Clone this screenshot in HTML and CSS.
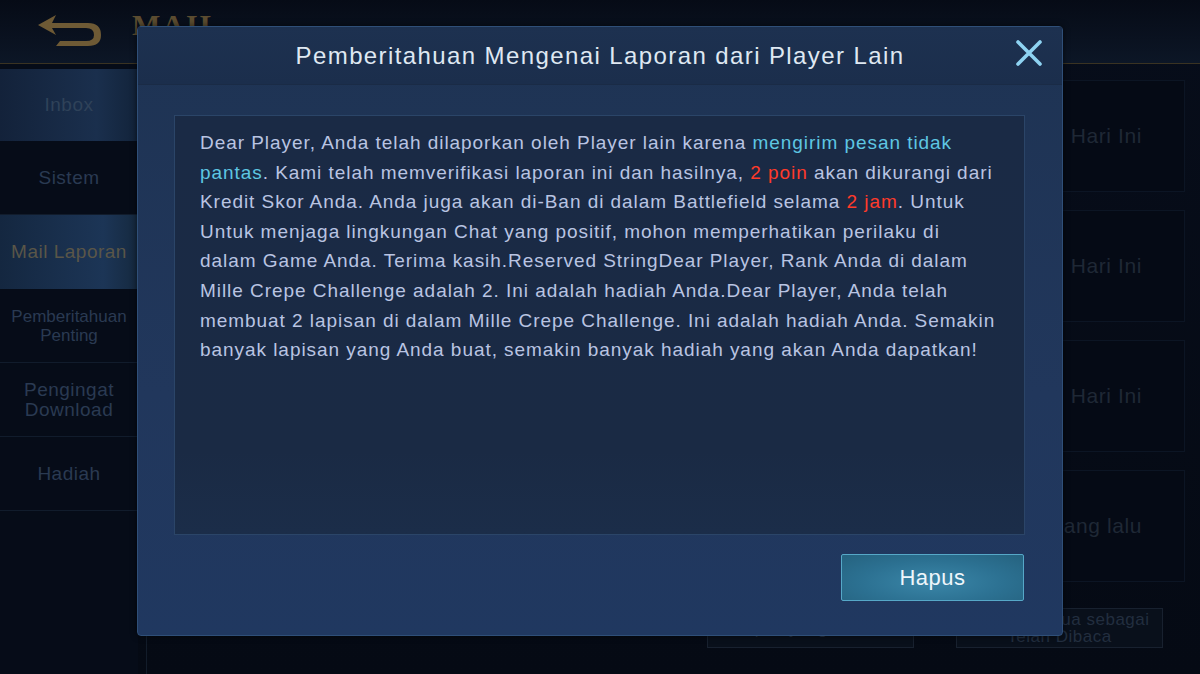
FILE: index.html
```html
<!DOCTYPE html>
<html lang="id">
<head>
    <meta charset="UTF-8">
    <meta name="viewport" content="width=device-width, initial-scale=1.0">
    <title>Mail</title>
    <link rel="stylesheet" href="styles.css">
</head>
<body>
    <div class="screen">
        <div class="topbar">
            <svg class="back" width="70" height="36" viewBox="0 0 70 36">
                <path d="M22 4 L4 14 L22 24 L18 17 L52 17 Q60 17 60 24 Q60 30 52 30 L26 30 L22 35 L54 35 Q67 35 67 24 Q67 12 54 12 L18 12 Z" fill="#6e5a35"/>
            </svg>
            <div class="page-title">MAIL</div>
        </div>

        <div class="main">
            <div class="sidebar">
                <div class="tab tab-light">Inbox</div>
                <div class="tab">Sistem</div>
                <div class="tab tab-active">Mail Laporan</div>
                <div class="tab tab-small">Pemberitahuan<br>Penting</div>
                <div class="tab">Pengingat<br>Download</div>
                <div class="tab">Hadiah</div>
            </div>

            <div class="content">
                <div class="mail-list">
                    <div class="mail-card"><span>Hari Ini</span></div>
                    <div class="mail-card"><span>Hari Ini</span></div>
                    <div class="mail-card"><span>Hari Ini</span></div>
                    <div class="mail-card"><span>1 hari yang lalu</span></div>
                </div>
                <div class="actions">
                    <div class="ghost-btn">Hapus yang Dibaca</div>
                    <div class="ghost-btn">Tandai semua sebagai<br>Telah Dibaca</div>
                </div>
            </div>
        </div>

        <div class="modal">
            <div class="modal-header">
                <h1>Pemberitahuan Mengenai Laporan dari Player Lain</h1>
                <svg class="close" width="28" height="28" viewBox="0 0 28 28">
                    <path d="M3 3 L25 25 M25 3 L3 25" stroke="#8ed3f2" stroke-width="3.6" stroke-linecap="round"/>
                </svg>
            </div>
            <div class="modal-body">
                <div class="message">
                    <p>Dear Player, Anda telah dilaporkan oleh Player lain karena <span class="cyan">mengirim pesan tidak pantas</span>. Kami telah memverifikasi laporan ini dan hasilnya, <span class="red">2 poin</span> akan dikurangi dari Kredit Skor Anda. Anda juga akan di-Ban di dalam Battlefield selama <span class="red">2 jam</span>. Untuk Untuk menjaga lingkungan Chat yang positif, mohon memperhatikan perilaku di dalam Game Anda. Terima kasih.Reserved StringDear Player, Rank Anda di dalam Mille Crepe Challenge adalah 2. Ini adalah hadiah Anda.Dear Player, Anda telah membuat 2 lapisan di dalam Mille Crepe Challenge. Ini adalah hadiah Anda. Semakin banyak lapisan yang Anda buat, semakin banyak hadiah yang akan Anda dapatkan!</p>
                </div>
                <div class="modal-footer">
                    <button class="btn-primary">Hapus</button>
                </div>
            </div>
        </div>
    </div>
</body>
</html>
```

FILE: styles.css
```css
* {
    box-sizing: border-box;
}

body {
    margin: 0;
    font-family: "Liberation Sans", Arial, sans-serif;
    background-color: #050a14;
    overflow: hidden;
}

.screen {
    position: relative;
    width: 1200px;
    height: 674px;
    display: flex;
    flex-direction: column;
    background: linear-gradient(180deg, #070d1a 0%, #050a14 100%);
}

.topbar {
    height: 64px;
    display: flex;
    align-items: center;
    gap: 28px;
    padding-left: 34px;
    border-bottom: 1px solid #3a3322;
    background: linear-gradient(180deg, #060b16 0%, #0c1626 100%);
}

.back {
    margin-top: -6px;
}

.page-title {
    font-family: "Liberation Serif", serif;
    font-weight: bold;
    font-size: 30px;
    letter-spacing: 2px;
    color: #5b4c30;
    margin-top: -14px;
}

.main {
    flex: 1;
    display: flex;
}

.sidebar {
    width: 138px;
    display: flex;
    flex-direction: column;
    padding-top: 5px;
    background: #060c18;
}

.tab {
    height: 74px;
    display: flex;
    align-items: center;
    justify-content: center;
    text-align: center;
    font-size: 19px;
    line-height: 20px;
    letter-spacing: 0.5px;
    color: #2a3a52;
    border-bottom: 1px solid #111c2c;
}

.tab-light {
    height: 72px;
    color: #2f4259;
    background: linear-gradient(90deg, #13223a 0%, #1a2f4d 70%, #12233a 100%);
    border-bottom: none;
}

.tab-active {
    color: #5a5648;
    background: linear-gradient(90deg, #142740 0%, #1c3556 75%, #15293f 100%);
    border-bottom: none;
}

.tab-small {
    font-size: 17px;
    line-height: 19px;
    letter-spacing: 0;
}

.content {
    flex: 1;
    display: flex;
    flex-direction: column;
    padding: 16px 15px 0 22px;
    border-left: 1px solid #121c2a;
    margin-left: 8px;
}

.mail-list {
    display: flex;
    flex-direction: column;
    gap: 18px;
}

.mail-card {
    height: 112px;
    display: flex;
    align-items: center;
    justify-content: flex-end;
    padding-right: 42px;
    border: 1px solid #0c1524;
    background: #050a15;
    font-size: 21px;
    letter-spacing: 0.6px;
    color: #1f2835;
}

.actions {
    display: flex;
    justify-content: flex-end;
    gap: 42px;
    margin-top: 26px;
    padding-right: 22px;
}

.ghost-btn {
    width: 207px;
    height: 40px;
    display: flex;
    align-items: center;
    justify-content: center;
    text-align: center;
    font-size: 17px;
    line-height: 17px;
    letter-spacing: 0.5px;
    color: #222e3f;
    border: 1px solid #18212f;
    background: #09101b;
}

/* popup */

.modal {
    position: absolute;
    left: 137px;
    top: 26px;
    width: 926px;
    height: 610px;
    display: flex;
    flex-direction: column;
    border-radius: 4px;
    border: 1px solid #2f4f78;
    background: linear-gradient(180deg, #1e3353 0%, #21375c 60%, #203860 100%);
    box-shadow: 0 0 6px rgba(0, 0, 0, 0.6);
}

.modal-header {
    position: relative;
    height: 58px;
    display: flex;
    align-items: center;
    justify-content: center;
    background: linear-gradient(180deg, #1d3150 0%, #1b2e4c 100%);
    border-bottom: 1px solid #1a2b46;
}

.modal-header h1 {
    margin: 0;
    font-weight: normal;
    font-size: 24px;
    letter-spacing: 1.4px;
    color: #dfe8f2;
}

.close {
    position: absolute;
    right: 19px;
    top: 12px;
}

.modal-body {
    flex: 1;
    display: flex;
    flex-direction: column;
    padding: 30px 37px 0 36px;
}

.message {
    height: 420px;
    padding: 12px 24px 0 25px;
    background: linear-gradient(180deg, #1a2a45 0%, #1a2a44 80%, #1b2d49 100%);
    border: 1px solid #2b4568;
}

.message p {
    margin: 0;
    font-size: 19px;
    line-height: 29.6px;
    letter-spacing: 0.95px;
    color: #b9c4e2;
}

.cyan {
    color: #5ec6e2;
}

.red {
    color: #ff3a2a;
}

.modal-footer {
    display: flex;
    justify-content: flex-end;
    padding-top: 19px;
    padding-right: 1px;
}

.btn-primary {
    width: 183px;
    height: 47px;
    font-family: "Liberation Sans", Arial, sans-serif;
    font-size: 22px;
    letter-spacing: 0.5px;
    color: #eef6fb;
    border: 1px solid #56a8c8;
    border-radius: 2px;
    background: radial-gradient(ellipse at 50% 60%, #3a86a8 0%, #2c7192 55%, #25627f 100%);
    cursor: pointer;
}
```
